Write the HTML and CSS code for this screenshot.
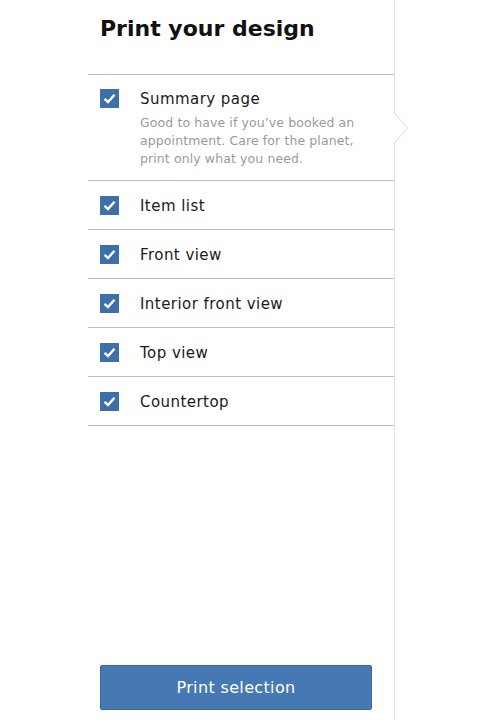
FILE: index.html
```html
<!DOCTYPE html>
<html>
<head>
<meta charset="utf-8">
<link rel="stylesheet" href="styles.css">
</head>
<body>
<div class="panel">
  <h1 class="title">Print your design</h1>
  <ul class="list">
    <li class="item first">
      <span class="box"><svg viewBox="0 0 19 19" width="19" height="19"><path d="M4.5 9.8 L8 13 L14.5 5.8" fill="none" stroke="#fff" stroke-width="2.4"/></svg></span>
      <div class="text">
        <div class="label">Summary page</div>
        <div class="desc">Good to have if you’ve booked an appointment. Care for the planet, print only what you need.</div>
      </div>
      <svg class="notch" viewBox="0 0 16 32" width="16" height="32"><polyline points="0.5,0 14.5,16 0.5,32" fill="#fff" stroke="#dcdcdc" stroke-width="1"/></svg>
    </li>
    <li class="item">
      <span class="box"><svg viewBox="0 0 19 19" width="19" height="19"><path d="M4.5 9.8 L8 13 L14.5 5.8" fill="none" stroke="#fff" stroke-width="2.4"/></svg></span>
      <div class="text"><div class="label">Item list</div></div>
    </li>
    <li class="item">
      <span class="box"><svg viewBox="0 0 19 19" width="19" height="19"><path d="M4.5 9.8 L8 13 L14.5 5.8" fill="none" stroke="#fff" stroke-width="2.4"/></svg></span>
      <div class="text"><div class="label">Front view</div></div>
    </li>
    <li class="item">
      <span class="box"><svg viewBox="0 0 19 19" width="19" height="19"><path d="M4.5 9.8 L8 13 L14.5 5.8" fill="none" stroke="#fff" stroke-width="2.4"/></svg></span>
      <div class="text"><div class="label">Interior front view</div></div>
    </li>
    <li class="item">
      <span class="box"><svg viewBox="0 0 19 19" width="19" height="19"><path d="M4.5 9.8 L8 13 L14.5 5.8" fill="none" stroke="#fff" stroke-width="2.4"/></svg></span>
      <div class="text"><div class="label">Top view</div></div>
    </li>
    <li class="item">
      <span class="box"><svg viewBox="0 0 19 19" width="19" height="19"><path d="M4.5 9.8 L8 13 L14.5 5.8" fill="none" stroke="#fff" stroke-width="2.4"/></svg></span>
      <div class="text"><div class="label">Countertop</div></div>
    </li>
  </ul>
  <button class="print">Print selection</button>
</div>
</body>
</html>
```

FILE: styles.css
```css
html, body {
  margin: 0;
  padding: 0;
  background: #fff;
}
body {
  font-family: "DejaVu Sans", Verdana, sans-serif;
  color: #111;
}
.panel {
  box-sizing: border-box;
  margin-left: 88px;
  width: 307px;
  height: 720px;
  border-right: 1px solid #e2e2e2;
  display: flex;
  flex-direction: column;
  position: relative;
}
.title {
  margin: 0;
  padding: 15px 0 0 12px;
  box-sizing: border-box;
  height: 75px;
  font-size: 22px;
  font-weight: bold;
  line-height: 28px;
  color: #111;
  border-bottom: 1px solid #bdbdbd;
}
.list {
  list-style: none;
  margin: 0;
  padding: 0;
}
.item {
  position: relative;
  display: flex;
  align-items: flex-start;
  padding: 15px 0 13px 12px;
  border-bottom: 1px solid #bdbdbd;
}
.item.first {
  padding-top: 14px;
  padding-bottom: 12px;
}
.box {
  flex: none;
  width: 19px;
  height: 19px;
  background: #3d70a8;
  display: block;
}
.box svg {
  display: block;
}
.text {
  margin-left: 21px;
  padding-top: 1px;
}
.label {
  font-size: 15px;
  line-height: 19px;
  letter-spacing: 0.45px;
  color: #1a1a1a;
}
.desc {
  margin-top: 5px;
  font-size: 12.5px;
  line-height: 18px;
  letter-spacing: 0.1px;
  color: #9a9a9a;
  width: 232px;
}
.notch {
  position: absolute;
  right: -15px;
  top: 37px;
}
.print {
  margin: auto 0 10px 12px;
  width: 272px;
  height: 45px;
  background: #4679b3;
  border: 1px solid #3a6699;
  border-radius: 2px;
  color: #fff;
  font-family: "DejaVu Sans", Verdana, sans-serif;
  font-size: 16px;
  letter-spacing: 0.35px;
  padding: 0;
}
```
